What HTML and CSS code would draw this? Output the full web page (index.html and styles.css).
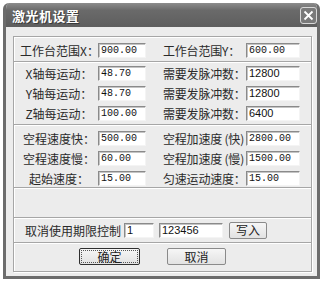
FILE: index.html
```html
<!DOCTYPE html>
<html lang="zh-CN">
<head>
  <meta charset="UTF-8" />
  <title>激光机设置</title>
  <link rel="stylesheet" href="styles.css">
</head>
<body>
  <div class="window">
    <div class="titlebar">
      <span class="title">激光机设置</span>
      <span class="close">
        <svg width="11" height="11" viewBox="0 0 11 11"><path d="M1.5 1.5 L9.5 9.5 M9.5 1.5 L1.5 9.5" stroke="#fff" stroke-width="1.8"/></svg>
      </span>
    </div>

    <div class="frame">
      <div class="group g1">
        <div class="row">
          <label class="lab1">工作台范围X：</label>
          <input class="in1 mono" type="text" value="900.00" />
          <label class="lab2">工作台范围Y：</label>
          <input class="in2 mono" type="text" value="600.00" />
        </div>
      </div>

      <div class="group g2">
        <div class="row">
          <label class="lab1">X轴每运动：</label>
          <input class="in1 mono" type="text" value="48.70" />
          <label class="lab2">需要发脉冲数：</label>
          <input class="in2" type="text" value="12800" />
        </div>
        <div class="row">
          <label class="lab1">Y轴每运动：</label>
          <input class="in1 mono" type="text" value="48.70" />
          <label class="lab2">需要发脉冲数：</label>
          <input class="in2" type="text" value="12800" />
        </div>
        <div class="row">
          <label class="lab1">Z轴每运动：</label>
          <input class="in1 mono" type="text" value="100.00" />
          <label class="lab2">需要发脉冲数：</label>
          <input class="in2" type="text" value="6400" />
        </div>
      </div>

      <div class="group g3">
        <div class="row">
          <label class="lab1">空程速度快：</label>
          <input class="in1 mono" type="text" value="500.00" />
          <label class="lab2">空程加速度 (快)</label>
          <input class="in2 mono" type="text" value="2800.00" />
        </div>
        <div class="row">
          <label class="lab1">空程速度慢：</label>
          <input class="in1 mono" type="text" value="60.00" />
          <label class="lab2">空程加速度 (慢)</label>
          <input class="in2 mono" type="text" value="1500.00" />
        </div>
        <div class="row">
          <label class="lab1">起始速度：</label>
          <input class="in1 mono" type="text" value="15.00" />
          <label class="lab2">匀速运动速度：</label>
          <input class="in2 mono" type="text" value="15.00" />
        </div>
      </div>

      <div class="group g4"></div>

      <div class="group g5">
        <div class="row">
          <label class="lab3">取消使用期限控制</label>
          <input class="in3" type="text" value="1" />
          <input class="in4" type="text" value="123456" />
          <button class="btn btn-small">写入</button>
        </div>
      </div>

      <div class="group g6">
        <button class="btn btn-ok"><span>确定</span></button>
        <button class="btn btn-cancel">取消</button>
      </div>
    </div>
  </div>
</body>
</html>
```

FILE: styles.css
```css
body {
  margin: 0;
  background: #fff;
  font-family: "Noto Sans CJK SC", "Liberation Sans", sans-serif;
  font-size: 12px;
  color: #2a2a2a;
}

.window {
  margin: 3px 0 0 3px;
  width: 317px;
  height: 276px;
  box-sizing: border-box;
  background: #ececec;
  border: 3px solid #6c6c6c;
  border-top: none;
  border-radius: 6px 6px 0 0;
  overflow: hidden;
}

.titlebar {
  height: 24px;
  margin: 0 -3px;
  padding: 0 3px 0 9px;
  display: flex;
  align-items: center;
  justify-content: space-between;
  background: linear-gradient(#8c8c8c, #6a6a6a 30%, #5e5e5e);
}

.title {
  color: #fff;
  font-weight: bold;
  font-size: 13px;
  letter-spacing: 0.5px;
  text-shadow: 1px 1px 0 #3a3a3a;
}

.close {
  width: 17px;
  height: 17px;
  box-sizing: border-box;
  border: 1px solid #d8d8d8;
  border-radius: 3px;
  background: #7a7a7a;
  display: flex;
  align-items: center;
  justify-content: center;
}

.frame {
  margin: 9px 5px 0 7px;
  height: 234px;
  border: 1px solid #a6a6a6;
  box-shadow: 1px 1px 0 #fff, inset 1px 1px 0 #fff;
}

.group + .group {
  border-top: 1px solid #a6a6a6;
  box-shadow: inset 0 1px 0 #fff;
}

.g1 { height: 24px; padding-top: 3px; box-sizing: border-box; }
.g2 { height: 63px; padding-top: 1px; box-sizing: border-box; }
.g3 { height: 63px; padding-top: 3px; box-sizing: border-box; }
.g4 { height: 29px; }
.g5 { height: 25px; padding-top: 2px; box-sizing: border-box; }

.g6 {
  height: 29px;
  box-sizing: border-box;
  padding: 5px 0 0 65px;
  display: flex;
  align-items: flex-start;
  gap: 27px;
}

.row {
  height: 20px;
  display: flex;
  align-items: center;
}

.lab1 {
  width: 84px;
  padding-left: 6px;
  box-sizing: border-box;
  text-align: center;
  white-space: nowrap;
}

.lab2 {
  width: 83px;
  margin-left: 17px;
  white-space: nowrap;
  letter-spacing: -0.2px;
}

.lab3 {
  width: 96px;
  margin-left: 11px;
  margin-right: 3px;
}

input {
  height: 15px;
  box-sizing: border-box;
  padding: 0 0 0 2px;
  border: 1px solid;
  border-color: #8a8a8a #f4f4f4 #f4f4f4 #8a8a8a;
  box-shadow: inset 1px 1px 0 #c4c4c4;
  background: #fff;
  font-family: "Liberation Sans", sans-serif;
  font-size: 11px;
  color: #111;
  outline: none;
}

input.mono {
  font-family: "Liberation Mono", monospace;
  font-size: 10px;
}

.in1 { width: 48px; }
.in2 { width: 54px; }
.in3 { width: 30px; }
.in4 { width: 64px; margin-left: 5px; }

.btn {
  height: 17px;
  padding: 0;
  box-sizing: border-box;
  background: linear-gradient(#f6f6f6, #e2e2e2);
  border: 1px solid #8a8a8a;
  border-radius: 2px;
  font-family: "Noto Sans CJK SC", sans-serif;
  font-size: 12px;
  line-height: 14px;
  color: #222;
}

.btn-small {
  width: 38px;
  margin-left: 6px;
}

.btn-ok {
  width: 61px;
  border: 1px solid #2e2e2e;
  padding: 1px;
}

.btn-ok span {
  display: block;
  height: 100%;
  border: 1px dotted #555;
  box-sizing: border-box;
  line-height: 11px;
}

.btn-cancel {
  width: 59px;
}
```
